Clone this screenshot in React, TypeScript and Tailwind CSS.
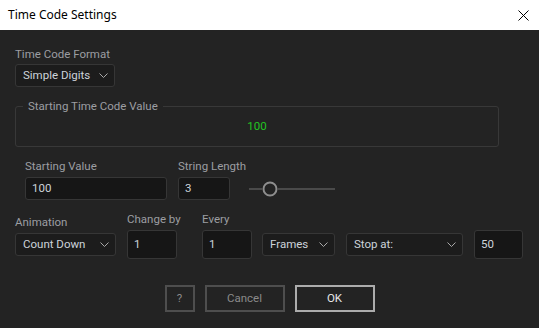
//small down chevron used in the dark select boxes
function Chevron() {
  return (
    <svg width="9" height="5" viewBox="0 0 9 5" className="shrink-0" aria-hidden>
      <path d="M0.5 0.5 L4.5 4.5 L8.5 0.5" fill="none" stroke="#a8a8a8" strokeWidth="1" />
    </svg>
  )
}

function Select({ label, className }: { label: string; className: string }) {
  return (
    <div
      className={`flex h-[23px] shrink-0 items-center justify-between rounded-[3px] border border-[#363636] bg-[#1c1c1c] pl-[7px] pr-[6px] text-[11.5px] whitespace-nowrap text-[#cdd3da] ${className}`}
    >
      <span>{label}</span>
      <Chevron />
    </div>
  )
}

function Field({ value, className }: { value: string; className: string }) {
  return (
    <div
      className={`flex shrink-0 items-center rounded-[3px] border border-[#363636] bg-[#161616] pl-[6px] text-[11.5px] text-[#cdd3da] ${className}`}
    >
      {value}
    </div>
  )
}

function Label({ children }: { children: string }) {
  return (
    <div className="h-[16px] whitespace-nowrap text-[11.5px] leading-[16px] text-[#9c9ea2]">{children}</div>
  )
}

export default function App() {
  return (
    <div className="flex h-[328px] w-[539px] flex-col bg-[#232323] font-['Roboto',sans-serif]">
      <header className="flex h-[30px] shrink-0 items-center justify-between bg-white pl-[8px] pr-[10px]">
        <span className="font-['Noto_Sans',sans-serif] text-[12px] text-black">Time Code Settings</span>
        <svg width="11" height="11" viewBox="0 0 11 11" aria-hidden>
          <path d="M0.5 0.5 L10.5 10.5 M10.5 0.5 L0.5 10.5" stroke="#000" strokeWidth="1" />
        </svg>
      </header>

      <div className="flex flex-col px-[15px] pt-[16px]">
        <Label>Time Code Format</Label>
        <Select label="Simple Digits" className="mt-[2px] w-[100px]" />

        <fieldset className="mt-[11px] w-[484px] rounded-[3px] border border-[#383838] pb-[12px]">
          <legend className="ml-[7px] h-[16px] px-[5px] text-[11.5px] leading-[16px] text-[#9c9ea2]">
            Starting Time Code Value
          </legend>
          <div className="pt-[4px] text-center text-[11.5px] leading-[16px] text-[#22c322]">100</div>
        </fieldset>

        <div className="mt-[11px] flex items-start pl-[10px]">
          <div className="flex w-[142px] shrink-0 flex-col">
            <Label>Starting Value</Label>
            <Field value="100" className="mt-[3px] h-[23px] w-[142px]" />
          </div>
          <div className="ml-[11px] flex w-[52px] shrink-0 flex-col">
            <Label>String Length</Label>
            <Field value="3" className="mt-[3px] h-[23px] w-[52px]" />
          </div>
          <svg width="86" height="16" viewBox="0 0 86 16" className="ml-[19px] mt-[23px] shrink-0" aria-hidden>
            <line x1="0" y1="8" x2="13" y2="8" stroke="#4a4a4a" strokeWidth="2" />
            <line x1="29" y1="8" x2="86" y2="8" stroke="#4a4a4a" strokeWidth="2" />
            <circle cx="21" cy="8" r="6.5" fill="#232323" stroke="#8e8e8e" strokeWidth="2" />
          </svg>
        </div>

        <div className="mt-[11px] flex items-start">
          <div className="mt-[3px] flex w-[101px] shrink-0 flex-col">
            <Label>Animation</Label>
            <Select label="Count Down" className="mt-[3px] w-[101px]" />
          </div>
          <div className="ml-[11px] flex w-[50px] shrink-0 flex-col">
            <Label>Change by</Label>
            <Field value="1" className="mt-[3px] h-[29px] w-[50px]" />
          </div>
          <div className="ml-[25px] flex w-[50px] shrink-0 flex-col">
            <Label>Every</Label>
            <Field value="1" className="mt-[3px] h-[29px] w-[50px]" />
          </div>
          <Select label="Frames" className="ml-[10px] mt-[22px] w-[73px]" />
          <Select label="Stop at:" className="ml-[11px] mt-[22px] w-[117px]" />
          <Field value="50" className="ml-[11px] mt-[19px] h-[29px] w-[49px]" />
        </div>

        <div className="mt-[26px] flex justify-center gap-[10px] text-[11.5px]">
          <button className="h-[27px] w-[30px] border-2 border-[#4e4e4e] text-[#8a8a8a]">?</button>
          <button className="h-[27px] w-[80px] border-2 border-[#4e4e4e] text-[#8a8a8a]">Cancel</button>
          <button className="h-[27px] w-[80px] border-2 border-[#acacac] text-[#e6e6e6]">OK</button>
        </div>
      </div>
    </div>
  )
}
